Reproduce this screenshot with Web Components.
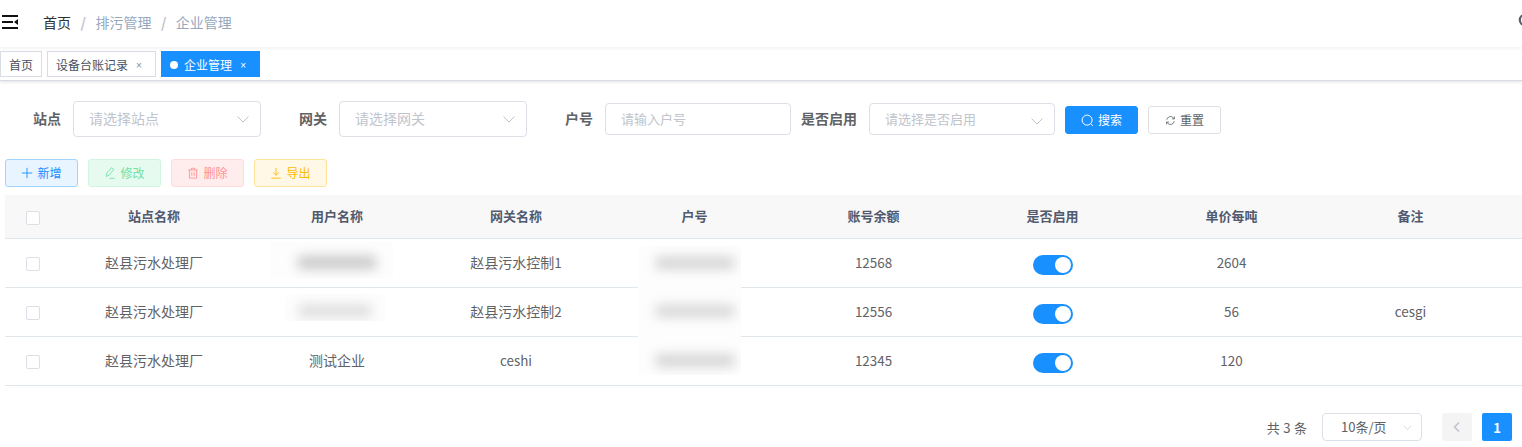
<!DOCTYPE html>
<html lang="zh"><head><meta charset="utf-8"><title>企业管理</title>
<style>
html,body{margin:0;padding:0;background:#fff;overflow:hidden;height:447px}
body{font-family:"Noto Sans CJK SC","Noto Sans",sans-serif;font-size:14px;color:#606266}
admin-page{display:block;width:1522px;height:447px}
</style></head><body>
<admin-page></admin-page>
<script>
const ICONS={
plus:'<path d="M7 1v12M1 7h12"/>',
edit:'<path d="M2.6 11 3.4 7 8.8 .8l2.6 2.2L6 9.4 2.6 11ZM6.5 13.2h6"/>',
del:'<path d="M1.5 3.5h11M5 3.5V1.5h4v2M2.8 3.5v9.5h8.4V3.5M5.6 6v4.4M8.4 6v4.4"/>',
down:'<path d="M7 1v8.5M3.8 6.4 7 9.6l3.2-3.2M1.5 13h11"/>',
search:'<circle cx="6.6" cy="6.6" r="5.4"/><path d="m10.6 10.6 2.2 2.2"/>',
refresh:'<path d="M2.2 6A5 5 0 0 1 10.8 3.6L12 5M11.8 8a5 5 0 0 1-8.6 2.4L2 9"/><path d="M12 2v3H9M2 12V9h3"/>',
};
const svg=(n,s)=>`<svg width="${s||12}" height="${s||12}" viewBox="0 0 14 14" fill="none" stroke="currentColor" stroke-width="1.05">${ICONS[n]}</svg>`;
class Base extends HTMLElement{
  html(s){this.attachShadow({mode:'open'}).innerHTML=s}
}
customElements.define('ui-button',class extends Base{connectedCallback(){
  const v=this.getAttribute('variant')||'default',i=this.getAttribute('icon');
  const c={default:['#fff','#dcdfe6','#606266'],primary:['#1890ff','#1890ff','#fff'],blue:['#e8f4ff','#a3d3ff','#1890ff'],green:['#e7faf0','#d0f5e0','#71e2a3'],red:['#ffeded','#ffdbdb','#ff9292'],yellow:['#fff8e6','#ffe399','#ffba00']}[v];
  const size=i==='search'?13:i==='refresh'?11:12;
  this.html(`<style>:host{display:inline-flex;box-sizing:border-box;width:73px;height:28px;align-items:center;justify-content:center;gap:4px;border:1px solid ${c[1]};background:${c[0]};color:${c[2]};border-radius:3px;font-size:12px;line-height:1}svg{display:block}</style>${svg(i,size)}<slot></slot>`);
}});
customElements.define('ui-select',class extends Base{connectedCallback(){
  const w=this.getAttribute('w'),h=this.getAttribute('h'),arrow=this.hasAttribute('arrow');
  const dy=this.getAttribute('dy')||0, fs=this.getAttribute('fs')||14, col=this.getAttribute('col')||'#c0c4cc', pl=this.getAttribute('pl')||15, as=this.getAttribute('as')||14, mr=this.getAttribute('mr')||-5;
  this.html(`<style>:host{display:flex;box-sizing:border-box;width:${w}px;height:${h}px;align-items:center;border:1px solid #dcdfe6;border-radius:4px;background:#fff;padding:0 15px 0 ${pl}px;font-size:${fs}px;color:${col};flex:none}
  span{flex:1;position:relative;top:-1px;white-space:nowrap}svg{display:block;margin-right:${mr}px;transform:translateY(${dy}px)}</style><span><slot></slot></span>${arrow?`<svg width="${as}" height="${as}" viewBox="0 0 14 14" fill="none" stroke="#c0c4cc" stroke-width="1"><path d="m1.5 4.5 5.5 5.5 5.5-5.5"/></svg>`:''}`);
}});
customElements.define('form-item',class extends Base{connectedCallback(){
  this.html(`<style>:host{display:flex;align-items:center}label{box-sizing:border-box;width:68px;padding-right:12px;text-align:right;font-weight:700;font-size:14px;color:#606266;white-space:nowrap;position:relative;top:-1px}</style><label>${this.getAttribute('label')}</label><slot></slot>`);
}});
customElements.define('app-navbar',class extends Base{connectedCallback(){
  this.html(`<style>:host{display:flex;align-items:center;height:47px;box-sizing:border-box;padding-bottom:3px;background:#fff;box-shadow:0 1px 4px rgba(0,21,41,.08);position:relative;z-index:2;font-size:14px;overflow:hidden}
  .h{margin-left:2px;width:16px;height:14px;flex:none;display:block}
  nav{margin-left:25px;display:flex;color:#97a8be}b{font-weight:400;color:#303133}i{font-style:normal;font-weight:700;color:#c0c4cc;margin:0 9.5px}
  .s{margin-left:auto;margin-right:-12px;display:block;flex:none;margin-top:-3px}</style>
  <svg class="h" viewBox="0 0 16 14" fill="#111"><rect x="0" y="0" width="16" height="2"/><rect x="0" y="6" width="11" height="2"/><rect x="0" y="12" width="16" height="2"/><path d="M16 4v6l-4-3z"/></svg>
  <nav><b>首页</b><i>/</i><span>排污管理</span><i>/</i><span>企业管理</span></nav>
  <svg class="s" width="16" height="16" viewBox="0 0 16 16" fill="none" stroke="#5a5e66" stroke-width="2.2"><circle cx="7" cy="7" r="5.2"/></svg>`);
}});
customElements.define('tag-item',class extends Base{connectedCallback(){
  const a=this.hasAttribute('active'),c=this.hasAttribute('closable');
  this.html(`<style>:host{display:inline-flex;align-items:center;box-sizing:border-box;height:26px;padding:0 8px;border:1px solid ${a?'#1890ff':'#d8dce5'};background:${a?'#1890ff':'#fff'};color:${a?'#fff':'#495060'};font-size:12px;flex:none;white-space:nowrap}
  .t{position:relative;top:1px}
  .d{width:8px;height:8px;border-radius:50%;background:#fff;margin-right:6px;position:relative;top:1px}
  .x{width:16px;margin-left:3px;text-align:center;font-size:10px;color:${a?'#fff':'#8a8f99'};font-family:"Liberation Sans",sans-serif;line-height:1;position:relative;top:2px}</style>${a?'<span class="d"></span>':''}<span class="t"><slot></slot></span>${c?'<span class="x">×</span>':''}`);
}});
customElements.define('tag-bar',class extends Base{connectedCallback(){
  this.html(`<style>:host{display:flex;align-items:center;gap:5px;height:34px;box-sizing:border-box;background:#fff;border-bottom:1px solid #d8dce5;box-shadow:0 1px 3px rgba(0,0,0,.12);position:relative;z-index:1}</style><slot></slot>`);
}});
customElements.define('filter-form',class extends Base{connectedCallback(){
  this.html(`<style>:host{display:flex;align-items:center;gap:10px;padding:20px 0 0 5px;height:36px}::slotted(ui-button){margin-top:2px}</style><slot></slot>`);
}});
customElements.define('tool-bar',class extends Base{connectedCallback(){
  this.html(`<style>:host{display:flex;gap:10px;padding:22px 0 0 5px;height:28px}</style><slot></slot>`);
}});
customElements.define('ui-checkbox',class extends Base{connectedCallback(){
  this.html(`<style>:host{display:block;box-sizing:border-box;width:14px;height:14px;border:1px solid #dcdfe6;border-radius:2px;background:#fff;margin-top:3px}</style>`);
}});
customElements.define('ui-switch',class extends Base{connectedCallback(){
  this.html(`<style>:host{display:block;box-sizing:border-box;width:40px;height:20px;border-radius:10px;background:#1890ff;position:relative;margin-top:4px}i{position:absolute;right:2px;top:2px;width:16px;height:16px;border-radius:50%;background:#fff}</style><i></i>`);
}});
customElements.define('blur-patch',class extends Base{connectedCallback(){
  const a=n=>this.getAttribute(n);
  this.html(`<style>:host{position:absolute;display:flex;align-items:center;justify-content:center;left:${a('l')}px;width:${a('w')}px;top:${a('t')}px;height:${a('h')}px;background:#fdfdfd;z-index:2;overflow:hidden}
  i{display:block;width:${a('bw')}px;height:${a('bh')}px;background:${a('c')};filter:blur(6px);transform:translate(${a('dx')||0}px,${a('dy')||0}px)}</style><i></i>`);
}});
const GRID='56px 186px 180px 178px 179px 179px 179px 179px 179px 1fr';
customElements.define('table-row',class extends Base{connectedCallback(){
  const head=this.hasAttribute('head');
  this.html(`<style>:host{display:grid;grid-template-columns:${GRID};height:${head?44:49}px;box-sizing:border-box;border-bottom:1px solid #dfe6ec;align-items:center;justify-items:center;text-align:center;position:relative;${head?'background:#f8f8f9;font-weight:700;color:#515a6e;font-size:13px;':'font-size:14px;color:#606266;'}}
  ::slotted(span){position:relative;top:-1px}::slotted(.l){font-size:13.4px}::slotted(ui-checkbox){position:relative;top:${head?0:-1}px}</style><slot></slot>`);
}});
customElements.define('data-table',class extends Base{connectedCallback(){
  this.html(`<style>:host{display:block;margin:8px 0 0 5px}</style><slot></slot>`);
}});
customElements.define('pager-bar',class extends Base{connectedCallback(){
  this.html(`<style>:host{display:flex;align-items:center;justify-content:flex-end;padding:27px 10px 0 0;height:28px;font-size:13px;color:#606266}
  .t{margin-right:15px;word-spacing:.6px}.b{width:30px;height:28px;border-radius:2px;display:flex;align-items:center;justify-content:center;background:#f4f4f5;margin-left:20px;color:#c0c4cc}
  .a{background:#1890ff;color:#fff;font-weight:700;margin-left:10px}</style>
  <span class="t">共 3 条</span><slot></slot>
  <span class="b"><svg width="12" height="12" viewBox="0 0 12 12" fill="none" stroke="currentColor" stroke-width="1.6"><path d="M8 1.5 3.5 6 8 10.5"/></svg></span><span class="b a">1</span>`);
}});
customElements.define('admin-page',class extends Base{connectedCallback(){
  const P=(l,w,t,h,bw,bh,c,dx,dy)=>`<blur-patch l="${l}" w="${w}" t="${t}" h="${h}" bw="${bw}" bh="${bh}" c="${c}" dx="${dx}" dy="${dy}"></blur-patch>`;
  const rows=[
   {u:'',g:'赵县污水控制<span style="font-size:13.4px">1</span>',n:'12568',p:'2604',r:'',patch:P(265,123,3,37,78,13,'#c8c8c8',5,2)+P(633,103,7,42,78,12,'#d2d2d2',5,-4)},
   {u:'',g:'赵县污水控制<span style="font-size:13.4px">2</span>',n:'12556',p:'56',r:'cesgi',patch:P(280,100,6,27,72,12,'#dcdcdc',0,3)+P(633,103,-1,50,78,12,'#d6d6d6',5,-1)},
   {u:'测试企业',g:'<span style="font-size:13.4px">ceshi</span>',n:'12345',p:'120',r:'',patch:P(633,103,-1,39,78,12,'#d2d2d2',5,4.5)}];
  const rowsHtml=rows.map(r=>`<table-row><ui-checkbox></ui-checkbox><span>赵县污水处理厂</span><span>${r.u}</span><span>${r.g}</span><span></span><span class="l">${r.n}</span><ui-switch></ui-switch><span class="l">${r.p}</span><span class="l">${r.r}</span>${r.patch}</table-row>`).join('');
  this.html(`<style>:host{display:block}</style>
  <app-navbar></app-navbar>
  <tag-bar><tag-item>首页</tag-item><tag-item closable>设备台账记录</tag-item><tag-item active closable>企业管理</tag-item></tag-bar>
  <filter-form>
    <form-item label="站点"><ui-select w="188" h="36" arrow>请选择站点</ui-select></form-item>
    <form-item label="网关"><ui-select w="188" h="36" arrow>请选择网关</ui-select></form-item>
    <form-item label="户号"><ui-select w="186" h="32" fs="13">请输入户号</ui-select></form-item>
    <form-item label="是否启用"><ui-select w="186" h="32" fs="13" arrow dy="2">请选择是否启用</ui-select></form-item>
    <ui-button variant="primary" icon="search">搜索</ui-button>
    <ui-button icon="refresh">重置</ui-button>
  </filter-form>
  <tool-bar>
    <ui-button variant="blue" icon="plus">新增</ui-button>
    <ui-button variant="green" icon="edit">修改</ui-button>
    <ui-button variant="red" icon="del">删除</ui-button>
    <ui-button variant="yellow" icon="down">导出</ui-button>
  </tool-bar>
  <data-table>
    <table-row head><ui-checkbox></ui-checkbox><span>站点名称</span><span>用户名称</span><span>网关名称</span><span>户号</span><span>账号余额</span><span>是否启用</span><span>单价每吨</span><span>备注</span></table-row>
    ${rowsHtml}
  </data-table>
  <pager-bar><ui-select w="100" h="28" arrow fs="13" col="#606266" pl="18" as="9" mr="-6">10条/页</ui-select></pager-bar>`);
}});
</script></body></html>
